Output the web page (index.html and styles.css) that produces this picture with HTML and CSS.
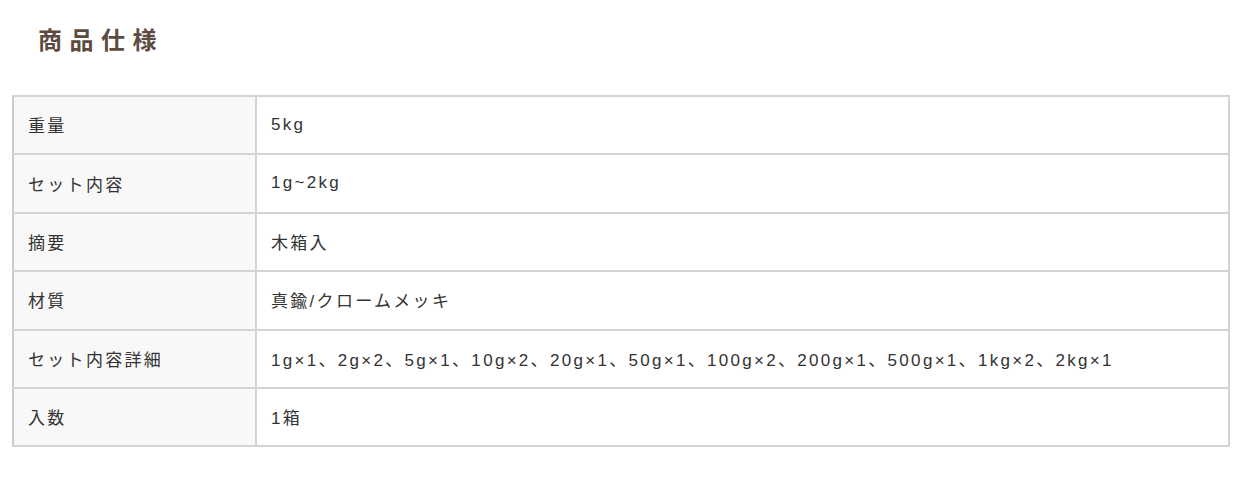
FILE: index.html
```html
<!DOCTYPE html>
<html lang="ja">
<head>
    <meta charset="UTF-8">
    <meta name="viewport" content="width=device-width, initial-scale=1.0">
    <title>商品仕様</title>
    <link rel="stylesheet" href="styles.css">
</head>
<body>

    <!-- 商品仕様 -->
    <div class="spec">
        <h2 class="spec-title">商品仕様</h2>
        <table class="spec-table">
            <tr>
                <th>重量</th>
                <td>5kg</td>
            </tr>
            <tr>
                <th>セット内容</th>
                <td>1g~2kg</td>
            </tr>
            <tr>
                <th>摘要</th>
                <td>木箱入</td>
            </tr>
            <tr>
                <th>材質</th>
                <td>真鍮/クロームメッキ</td>
            </tr>
            <tr>
                <th>セット内容詳細</th>
                <td>1g×1、2g×2、5g×1、10g×2、20g×1、50g×1、100g×2、200g×1、500g×1、1kg×2、2kg×1</td>
            </tr>
            <tr>
                <th>入数</th>
                <td>1箱</td>
            </tr>
        </table>
    </div>

</body>
</html>
```

FILE: styles.css
```css
body {
    margin: 0;
    background-color: #fff;
    color: #333;
    font-family: 'Liberation Sans', 'Noto Sans CJK JP', sans-serif;
}

.spec {
    padding: 26px 13px 0 12px;
}

.spec-title {
    margin: 0 0 39px 26px;
    font-size: 24px;
    line-height: 30px;
    font-weight: bold;
    color: #5b4b40;
    letter-spacing: 7.5px;
}

.spec-table {
    width: 100%;
    border-collapse: collapse;
    border: 2px solid #ccc;
}

.spec-table th,
.spec-table td {
    height: 58.4px;
    padding: 0 14px 1px 14px;
    border: 2px solid #d4d4d4;
    border-left: none;
    font-size: 17px;
    font-weight: normal;
    text-align: left;
    letter-spacing: 2.3px;
    box-sizing: border-box;
}

.spec-table th {
    width: 243px;
    background-color: #f8f8f8;
    border-right: 2px solid #d4d4d4;
}
```
